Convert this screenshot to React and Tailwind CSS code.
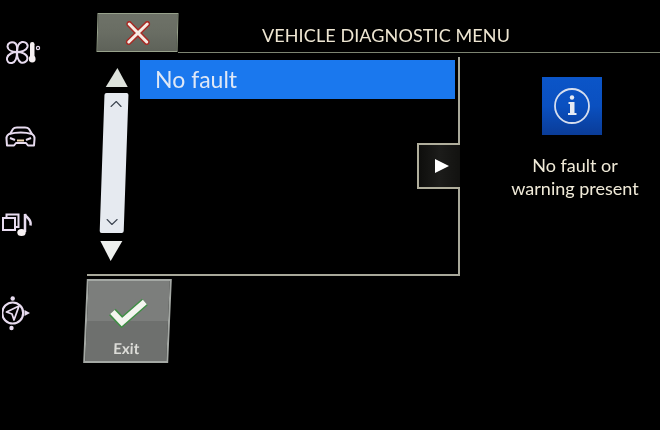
import { ChevronUp, ChevronDown } from 'lucide-react';

const FONT = "font-['Lato','Noto_Sans',sans-serif]";

function FanIcon() {
  return (
    <svg viewBox="0 0 40 36" className="w-10 h-9" fill="none" stroke="#e8dcf0" strokeWidth="2">
      <path d="M15 18 C12 18 6 17 5.500 12.500 C5.500 9 9 7.500 12 8.500 C15 9.500 15.500 14 15 18 Z" />
      <path d="M15 18 C15 14 16 9 20 8 C24 7.500 26 10 25.500 13 C24.500 16.500 19 18 15 18 Z" />
      <path d="M15 18 C19 18 25 19.500 25.500 24 C25.500 27.500 22 29.500 19 28.500 C16 27 15 22 15 18 Z" />
      <path d="M15 18 C15 22 14 28 10 29 C6.500 29.500 4.500 27 5 24 C6 20 11 18 15 18 Z" />
      <rect x="28" y="8" width="4.500" height="16" rx="2.200" fill="#f6f0f2" stroke="none" />
      <circle cx="30.200" cy="25" r="3.400" fill="#f6f0f2" stroke="none" />
      <circle cx="36" cy="14" r="1.600" strokeWidth="1.200" />
    </svg>
  );
}

function CarIcon() {
  return (
    <svg viewBox="0 0 40 36" className="w-10 h-9" fill="none" stroke="#e8dcf0" strokeWidth="2" strokeLinejoin="round">
      <path d="M8 15 L11 10 Q12 8.500 15 8.500 L23 8.500 Q26 8.500 27 10 L30 15" />
      <path d="M7 15 Q4 17 4.500 20 L5 26.500 L12 26.500 L14 24 L24 24 L26 26.500 L32 26.500 L32.500 20 Q33 17 30 15 Q19 12 7 15 Z" />
      <path d="M8 19 L13 21" />
      <path d="M29 19 L24 21" />
      <path d="M15 21.500 L22 21.500" stroke="#f0d8b0" />
    </svg>
  );
}

function MediaIcon() {
  return (
    <svg viewBox="0 0 40 36" className="w-10 h-9" fill="none" stroke="#e8dcf0" strokeWidth="2">
      <rect x="1" y="11" width="12" height="12" />
      <path d="M4.500 11 L4.500 7.500 L16.500 7.500 L16.500 20 L13 20" />
      <path d="M23 25 L23 7 C24 11 30 12 28.500 18.500" strokeWidth="2.500" />
      <ellipse cx="19.500" cy="25.500" rx="4.200" ry="3.500" fill="#f6f0f2" stroke="none" />
    </svg>
  );
}

function NavIcon() {
  return (
    <svg viewBox="0 0 40 36" className="w-10 h-9" fill="none" stroke="#e8dcf0" strokeWidth="2.200" strokeLinejoin="round">
      <circle cx="10.700" cy="18" r="10.500" />
      <path d="M17 11 L4.500 17 L10 19 L12 25 Z" strokeWidth="1.800" />
      <circle cx="10.700" cy="3.500" r="2.200" fill="#e8dcf0" stroke="none" />
      <circle cx="9.500" cy="33" r="2.200" fill="#e8dcf0" stroke="none" />
      <path d="M22.500 15 L28 18 L22.500 21 Z" fill="#e8dcf0" stroke="none" />
    </svg>
  );
}

function CloseIcon() {
  return (
    <svg viewBox="0 0 24 24" className="w-6 h-6" fill="none" strokeLinecap="round">
      <path d="M3 3 L21 21 M21 3 L3 21" stroke="#a82a24" strokeWidth="6" />
      <path d="M3 3 L21 21 M21 3 L3 21" stroke="#f6ece4" strokeWidth="3" />
    </svg>
  );
}

function CheckIcon() {
  return (
    <svg viewBox="0 0 40 32" className="w-10 h-8" fill="none" strokeLinejoin="miter">
      <path d="M4 15 L14 25 L36 5" stroke="#3f8f45" strokeWidth="9" />
      <path d="M4 15 L14 25 L36 5" stroke="#f4f6f0" strokeWidth="6" />
    </svg>
  );
}

function InfoIcon() {
  return (
    <svg viewBox="0 0 38 38" className="w-[38px] h-[38px]" fill="none">
      <circle cx="19" cy="19" r="17" stroke="#d6deee" strokeWidth="1.800" />
      <circle cx="19" cy="10.500" r="2.200" fill="#e6ebf4" />
      <path d="M15.500 15 L21.500 15 L21.500 26 L23.500 26 L23.500 28 L15 28 L15 26 L17 26 L17 17 L15.500 17 Z" fill="#e6ebf4" />
    </svg>
  );
}

function Scroller() {
  return (
    <div className="ml-[15px] w-[24px] pt-[11px] flex flex-col items-center skew-x-[-2deg]">
      <div className="w-0 h-0 border-x-[11px] border-x-transparent border-b-[19px] border-b-[#dde2dc]" />
      <div className="mt-[6px] w-[24px] h-[140px] rounded-[2px] bg-[#e6eaf0] flex flex-col items-center justify-between py-[1px]">
        <ChevronUp className="w-5 h-5 text-[#3c4450]" strokeWidth={1.3} />
        <ChevronDown className="w-5 h-5 text-[#3c4450]" strokeWidth={1.3} />
      </div>
      <div className="mt-[8px] w-0 h-0 border-x-[11px] border-x-transparent border-t-[20px] border-t-[#eef0ee]" />
    </div>
  );
}

export default function App() {
  return (
    <div className={`${FONT} relative w-[660px] h-[430px] bg-black overflow-hidden flex blur-[0.4px]`}>
      <div className="w-[83px] shrink-0 pt-[34px] pl-[2px] flex flex-col">
        <FanIcon />
        <div className="mt-[49px]"><CarIcon /></div>
        <div className="mt-[52px]"><MediaIcon /></div>
        <div className="mt-[52px]"><NavIcon /></div>
      </div>

      <div className="flex-1 flex flex-col pt-[13px]">
        <div className="flex h-[40px]">
          <div className="ml-[14px] w-[81px] h-[39px] shrink-0 flex items-center justify-center border border-[#98a28c] bg-gradient-to-b from-[#6e7268] via-[#696d63] to-[#5e6259] skew-x-[-1.5deg]">
            <CloseIcon />
          </div>
          <div className="flex-1 border-b border-[#7d8472] pl-[84px] pb-[6px] flex items-end">
            <span className="text-[18px] leading-[22px] tracking-[0.1px] text-[#eee6d2] whitespace-nowrap">VEHICLE DIAGNOSTIC MENU</span>
          </div>
        </div>

        <div className="flex mt-[4px]">
          <div className="relative ml-[4px] w-[373px] h-[219px] shrink-0 flex border-r-2 border-b-2 border-[#a8a89a]">
            <Scroller />
            <div className="ml-[14px] mt-[3px] w-[315px] h-[39px] bg-[#1a78ee] pl-[15px] flex items-center">
              <span className="text-[23px] text-[#dfe8f6]">No fault</span>
            </div>
            <div className="absolute right-[-2px] top-[86px] w-[43px] h-[46px] border-l-2 border-y-2 border-[#b0ae9c] bg-gradient-to-r from-[#0e0e0c] via-[#1c1c1a] to-[#121210] flex items-center pl-[16px]">
              <div className="w-0 h-0 border-y-[7px] border-y-transparent border-l-[14px] border-l-white" />
            </div>
          </div>

          <div className="flex-1 flex flex-col">
            <div className="ml-[82px] mt-[20px] w-[60px] h-[58px] bg-gradient-to-b from-[#0b55c8] via-[#0a50c0] to-[#0a3c98] flex items-center justify-center">
              <InfoIcon />
            </div>
            <p className="mt-[19px] pl-[30px] text-center text-[18px] leading-[23px] text-[#f0ead8] whitespace-nowrap">
              No fault or
              <br />
              warning present
            </p>
          </div>
        </div>

        <div className="ml-[2px] mt-[3px] w-[85px] h-[84px] border-2 border-[#a4a8a4] bg-gradient-to-b from-[#7c7e7c] from-50% to-[#6e706e] to-50% flex flex-col items-center pt-[16px] skew-x-[-2.5deg]">
          <CheckIcon />
          <span className="mt-[10px] text-[15px] leading-[18px] font-bold text-[#dcdcd8]">Exit</span>
        </div>
      </div>
    </div>
  );
}
